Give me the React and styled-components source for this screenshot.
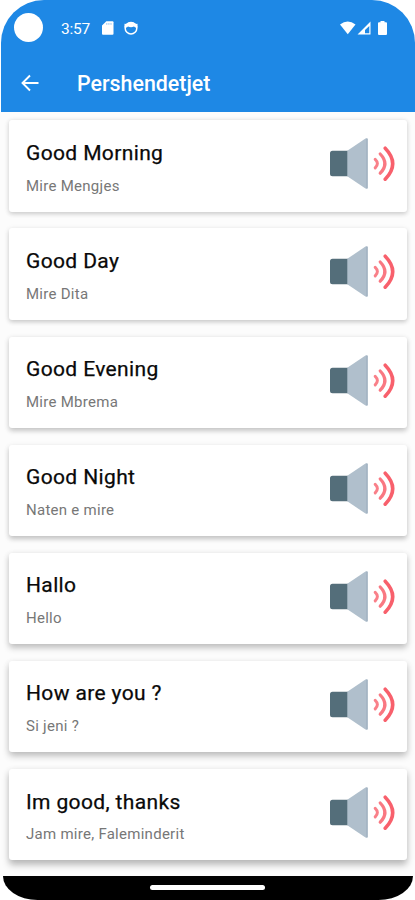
import React from 'react'
import styled, { createGlobalStyle } from 'styled-components';


const phrases = [
    { title: 'Good Morning', translation: 'Mire Mengjes' },
    { title: 'Good Day', translation: 'Mire Dita' },
    { title: 'Good Evening', translation: 'Mire Mbrema' },
    { title: 'Good Night', translation: 'Naten e mire' },
    { title: 'Hallo', translation: 'Hello' },
    { title: 'How are you ?', translation: 'Si jeni ?' },
    { title: 'Im good, thanks', translation: 'Jam mire, Faleminderit' },
]

function Speaker() {
    return (
        <SpeakerIcon viewBox="0 0 68 54">
            <path d="M3.500 13.800H20V39.300H3.500q-2.500 0-2.500-2.500V16.300q0-2.500 2.500-2.500z" fill="#546e7a" />
            <path d="M18.300 13.800 36.500 1.600q2.200-1.200 2.200.6v48.800q0 1.800-2.200.6L18.300 39.300z" fill="#b0bfcc" />
            <path d="M38 2v49" stroke="#9fb0bf" strokeWidth="1.200" />
            <g fill="none" stroke="#f8606c" strokeLinecap="round">
                <path d="M46.200 22.300q4.400 4.200 0 8.600" strokeWidth="3" opacity="0.800" />
                <path d="M51.200 17q9.400 9.600 0 19.200" strokeWidth="3.200" opacity="0.850" />
                <path d="M56.200 11.200q15 15.500 0 31" strokeWidth="3.500" />
            </g>
        </SpeakerIcon>
    )
}

function App() {
    return (
        <Screen>
            <GlobalStyle />
            <Header>
                <StatusBar>
                    <Camera />
                    <Clock>3:57</Clock>
                    <SdIcon viewBox="0 0 12 14">
                        <path d="M4.500 0H11q1 0 1 1v12q0 1-1 1H1q-1 0-1-1V4.500z" fill="#fff" />
                        <path d="M5 2v1.500M7.200 2v1.500M9.400 2v1.500" stroke="#1e88e5" strokeWidth="0.600" />
                    </SdIcon>
                    <FaceIcon viewBox="0 0 14 14">
                        <circle cx="7" cy="7.200" r="5.800" fill="none" stroke="#fff" strokeWidth="1.500" />
                        <path d="M.5 6.500V2.800l2 .2Q7-1 11.500 3l2-.2v3.700q-2.500.5-3.500-1-3 1.300-6 0-1 1.500-3.500 1z" fill="#fff" />
                    </FaceIcon>
                    <Spacer />
                    <WifiIcon viewBox="0 0 16 14">
                        <path d="M0 3.500Q8-2.800 16 3.500L8 13.500z" fill="#fff" />
                    </WifiIcon>
                    <SignalIcon viewBox="0 0 14 14">
                        <path fillRule="evenodd" d="M13.500.5v13H.5zM12.300 5 8 9v3.200h4.300z" fill="#fff" />
                    </SignalIcon>
                    <BatteryIcon viewBox="0 0 9 14">
                        <path d="M2.500 0h4v1.200H8q1 0 1 1V13q0 1-1 1H1q-1 0-1-1V2.200q0-1 1-1h1.500z" fill="#fff" />
                    </BatteryIcon>
                </StatusBar>
                <Toolbar>
                    <BackIcon viewBox="0 0 18 18">
                        <path d="M17.500 9H1.500M9 1.500 1.500 9 9 16.500" fill="none" stroke="#fff" strokeWidth="1.900" />
                    </BackIcon>
                    <PageTitle>Pershendetjet</PageTitle>
                </Toolbar>
            </Header>
            <List>
                {phrases.map((phrase, index) => (
                    <Card key={phrase.title} $depth={index}>
                        <Texts>
                            <h2>{phrase.title}</h2>
                            <p>{phrase.translation}</p>
                        </Texts>
                        <Speaker />
                    </Card>
                ))}
            </List>
            <NavBar>
                <Handle />
            </NavBar>
        </Screen>
    )
}

export default App

const GlobalStyle = createGlobalStyle`
    * {
        box-sizing: border-box;
    }

    body {
        margin: 0;
        background: #fff;
        overflow: hidden;
        font-family: Roboto, "Liberation Sans", sans-serif;
    }

    svg {
        display: block;
        flex-shrink: 0;
    }
`
const Screen = styled.main`
    width: 415px;
    height: 900px;
    display: flex;
    flex-direction: column;
    overflow: hidden;
`
const Header = styled.header`
    height: 111.500px;
    flex-shrink: 0;
    margin-left: 1px;
    background: #1e88e5;
    border-radius: 43px 43px 0 0;
`
const StatusBar = styled.div`
    display: flex;
    align-items: center;
    height: 56px;
    padding: 0 28.500px 0 13px;
`
const Camera = styled.div`
    width: 29px;
    height: 29px;
    margin-top: -2px;
    border-radius: 50%;
    background: #fff;
`
const Clock = styled.span`
    width: 41px;
    margin-left: 18px;
    padding-top: 1px;
    font-size: 15.500px;
    letter-spacing: -0.2px;
    color: #fff;
`
const SdIcon = styled.svg`
    width: 11.500px;
    height: 14px;
`
const FaceIcon = styled.svg`
    width: 14px;
    height: 14px;
    margin-left: 10px;
`
const Spacer = styled.div`
    flex: 1;
`
const WifiIcon = styled.svg`
    width: 15.500px;
    height: 14px;
`
const SignalIcon = styled.svg`
    width: 14px;
    height: 14px;
    margin-left: 1px;
`
const BatteryIcon = styled.svg`
    width: 9px;
    height: 14px;
    margin-left: 7px;
`
const Toolbar = styled.div`
    display: flex;
    align-items: center;
    height: 55px;
    padding-left: 20px;
`
const BackIcon = styled.svg`
    width: 18px;
    height: 18px;
    margin-top: -2px;
`
const PageTitle = styled.h1`
    margin: 0 0 0 38px;
    font-size: 21.400px;
    font-weight: 500;
    color: #fff;
`
const List = styled.section`
    flex: 1;
    min-height: 0;
    display: flex;
    flex-direction: column;
    gap: 16.800px;
    padding: 8.900px 8.500px 0 9px;
    background: #fcfcfc;
    overflow: hidden;
`
// lower cards cast a longer shadow
const Card = styled.article`
    display: flex;
    justify-content: space-between;
    flex-shrink: 0;
    height: 91.300px;
    padding: 17px 10px 0 17px;
    background: #fff;
    border-radius: 3px;
    box-shadow: 0 ${props => 1.5 + props.$depth * 0.5}px ${props => 4 + props.$depth * 0.6}px rgba(0, 0, 0, ${props => 0.16 + props.$depth * 0.015}),
        0 1px 7px rgba(0, 0, 0, 0.06);
`
const Texts = styled.div`
    h2, p {
        margin: 0;
        white-space: nowrap;
    }

    h2 {
        margin: 3.600px 0 11.600px;
        font-size: 21px;
        font-weight: 400;
        line-height: 24px;
        letter-spacing: 0.37px;
        color: #090909;
        -webkit-text-stroke: 0.25px #090909;
    }

    p {
        font-size: 15px;
        line-height: 18px;
        letter-spacing: 0.27px;
        color: #777;
    }
`
const SpeakerIcon = styled.svg`
    width: 68px;
    height: 54px;
`
const NavBar = styled.footer`
    display: flex;
    justify-content: center;
    flex-shrink: 0;
    height: 24.500px;
    margin: 0 2px 0 3px;
    padding-top: 9.500px;
    background: #000;
    border-radius: 0 0 36px 36px / 0 0 25px 25px;
`
const Handle = styled.div`
    width: 115px;
    height: 4.500px;
    margin-right: 1px;
    border-radius: 3px;
    background: #fff;
`
